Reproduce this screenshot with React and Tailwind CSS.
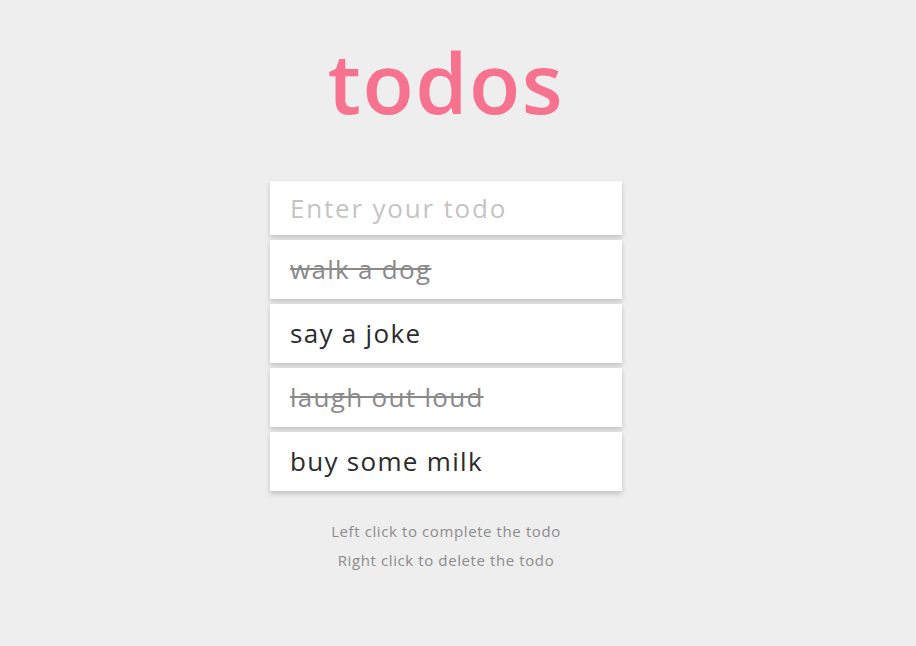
import React from "react";

const todos = [
  { text: "walk a dog", done: true },
  { text: "say a joke", done: false },
  { text: "laugh out loud", done: true },
  { text: "buy some milk", done: false },
];

export default function App() {
  return (
    <div className="min-h-[646px] w-full bg-[#eeeeee] font-['Open_Sans',sans-serif]">
      <div className="w-[892px] flex flex-col items-center">
        <h1 className="mt-[32px] h-[100px] leading-[100px] text-[84px] font-semibold text-[#f7728f] tracking-[1.5px]">
          todos
        </h1>
        <div className="mt-[49px] w-[352px] flex flex-col gap-[5px]">
          <div className="h-[54px] bg-white shadow-[0_3px_5px_rgba(0,0,0,0.18)] flex items-center px-5">
            <span className="text-[26px] text-[#c4c4c4] tracking-[1.8px]">Enter your todo</span>
          </div>
          {todos.map((t) => (
            <div
              key={t.text}
              className="h-[59px] bg-white shadow-[0_3px_5px_rgba(0,0,0,0.18)] flex items-center px-5"
            >
              <span
                className={
                  "text-[26px] tracking-[1.3px] " +
                  (t.done ? "text-[#8a8a8a] line-through" : "text-[#2b2b2b]")
                }
              >
                {t.text}
              </span>
            </div>
          ))}
        </div>
        <div className="mt-[31px] flex flex-col items-center gap-[10px] text-[15px] leading-[19px] text-[#8c8c8c] tracking-[0.6px]">
          <p>Left click to complete the todo</p>
          <p>Right click to delete the todo</p>
        </div>
      </div>
    </div>
  );
}
